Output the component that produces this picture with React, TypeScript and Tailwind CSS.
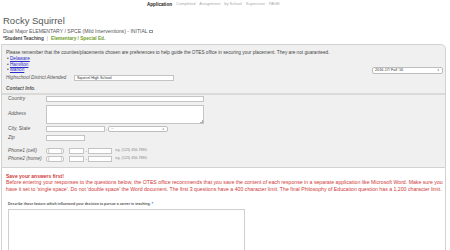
import React from 'react';

const navItems = [
  { label: 'Application', active: true },
  { label: 'Completed' },
  { label: 'Assignment' },
  { label: 'by School' },
  { label: 'Supervisor' },
  { label: 'PAGE' },
];

function Box({ className = '' }: { className?: string }) {
  return <div className={`bg-white border border-[#c4c4c4] ${className}`} />;
}

function Label({ children }: { children: React.ReactNode }) {
  return <div className="w-[38px] shrink-0 italic text-[#555] text-[4.9px]">{children}</div>;
}

export default function App() {
  return (
    <div
      className="w-[450px] h-[250px] overflow-hidden bg-white text-[#444]"
      style={{ fontFamily: '"Liberation Sans", Arial, sans-serif' }}
    >
      {/* Top nav (tabs, upper lines scrolled off) */}
      <div className="h-[8px] overflow-hidden">
        <div className="flex items-end h-[7px] ml-[147px] gap-[4px]">
          {navItems.map((n) => (
            <span
              key={n.label}
              className={n.active ? 'font-bold text-[#222] text-[4.6px] leading-[5px]' : 'text-[#aaa] text-[4px] leading-[5px] mb-[1px]'}
            >
              {n.label}
            </span>
          ))}
        </div>
      </div>

      {/* Heading */}
      <div className="pl-[3px] pt-[7px]">
        <div className="text-[9.5px] leading-[11px] text-[#555]">Rocky Squirrel</div>
        <div className="text-[5.1px] leading-[7px] mt-[1.5px] text-[#555]">
          Dual Major ELEMENTARY / SPCE (Mild Interventions) - INITIAL{' '}
          <span className="inline-block w-[4px] h-[3px] border border-[#999] align-middle" />
        </div>
        <div className="text-[4.7px] leading-[7px]">
          <span className="font-bold text-[#444]">*Student Teaching</span>
          <span className="text-[#999] mx-[3px]">|</span>
          <span className="font-bold text-[#6e9c1f]">Elementary / Special Ed.</span>
        </div>
      </div>

      {/* Preferences panel */}
      <div className="mt-[2.5px] ml-[1px] w-[445px] border border-[#d2d2d2] rounded-tr-[5px] bg-[#f0f0f0]">
        <div className="flex justify-between pl-[4px] pr-[2px] pt-[5px]">
          <div>
            <div className="text-[4.7px] leading-[6px] text-[#444]">
              Please remember that the counties/placements chosen are preferences to help guide the OTES office in securing your placement. They are not guaranteed.
            </div>
            <ul className="text-[4.7px] leading-[5.7px] pl-[1px]">
              {['Delaware', 'Hamilton', 'Marion'].map((c) => (
                <li key={c}>
                  <span className="text-[#444]">•</span>{' '}
                  <span className="text-[#2a2acc] underline">{c}</span>
                </li>
              ))}
            </ul>
            <div className="flex items-center h-[9px]">
              <span className="italic text-[#555] text-[4.8px] w-[68px]">Highschool District Attended</span>
              <div className="w-[100px] h-[6px] bg-white border border-[#c4c4c4] text-[3.8px] leading-[4px] pl-[2px] text-[#333]">
                Squirrel High School
              </div>
            </div>
          </div>
          <div className="self-end mb-[8px] w-[71px] h-[7px] bg-white border border-[#bdbdbd] rounded-[2px] flex items-center justify-between px-[2px] text-[3.8px] text-[#333]">
            <span>2016-17/ Fall '16</span>
            <span className="text-[3px] leading-[3px] text-[#555]">⇕</span>
          </div>
        </div>
        <div className="pl-[4px] h-[6px] mt-[4px] italic font-bold text-[4.8px] leading-[6px] text-[#555]">Contact Info.</div>

        {/* contact rows */}
        <div className="mt-[0.5px] border-t-2 border-[#dadada] pl-[6px] pb-[5px]">
          <div className="flex items-center mt-[1px] h-[6px]">
            <Label>Country</Label>
            <Box className="w-[158px] h-[6px]" />
          </div>
          <div className="flex items-center mt-[3px] h-[19px]">
            <Label>Address</Label>
            <div className="relative w-[158px] h-[19px] bg-white border border-[#c4c4c4]">
              <span className="absolute right-0 bottom-0 w-[3px] h-[3px] border-r border-b border-[#aaa]" />
            </div>
          </div>
          <div className="flex items-center mt-[2.5px] h-[6px]">
            <Label>City, State</Label>
            <Box className="w-[59px] h-[6px]" />
            <span className="text-[4.5px] mx-[1px]">,</span>
            <div className="w-[60px] h-[6px] bg-white border border-[#bdbdbd] rounded-[2px] flex items-center justify-between px-[2px] text-[3.5px]">
              <span>--</span>
              <span className="text-[3px] text-[#666]">⇕</span>
            </div>
          </div>
          <div className="flex items-center mt-[2.5px] h-[6px]">
            <Label>Zip</Label>
            <Box className="w-[39px] h-[6px]" />
          </div>
          {['Phone1 (cell)', 'Phone2 (home)'].map((p, i) => (
            <div key={p} className={`flex items-center h-[6.3px] ${i === 0 ? 'mt-[7px]' : 'mt-[2px]'}`}>
              <Label>{p}</Label>
              <div className="w-[18px] h-[6.3px] bg-white border border-[#c4c4c4] rounded-[2px] flex items-center justify-between px-[1px] text-[4px] text-[#666]">
                <span>(</span>
                <span>)</span>
              </div>
              <Box className="ml-[5px] w-[15px] h-[6.3px]" />
              <span className="text-[4px] mx-[1.5px]">-</span>
              <Box className="w-[24px] h-[6.3px]" />
              <span className="ml-[3px] text-[3.7px] text-[#888]">eg. (123) 456-7890</span>
            </div>
          ))}
        </div>
      </div>

      {/* Questions area */}
      <div className="ml-[1px] w-[445px] border-r border-l border-[#d2d2d2] pl-[4px] pt-[5px] h-[100px]">
        <div className="font-bold text-[#d03a3a] text-[5px] leading-[6px]">Save your answers first!</div>
        <div className="text-[#d03a3a] text-[5.2px] leading-[6.5px] pr-[2px]">
          Before entering your responses to the questions below, the OTES office recommends that you save the content of each response in a separate application like Microsoft Word. Make sure you have it set to 'single space'. Do not 'double space' the Word document. The first 3 questions have a 400 character limit. The final Philosophy of Education question has a 1,200 character limit.
        </div>
        <div className="mt-[9.5px] pl-[2px] font-bold text-[3.5px] leading-[5px] text-[#555]">
          Describe those factors which influenced your decision to pursue a career in teaching: <span className="text-[#3355cc]">*</span>
        </div>
        <div className="ml-[2px] mt-[2.5px] w-[237px] h-[60px] border border-[#cfcfcf] bg-white" />
      </div>
    </div>
  );
}
